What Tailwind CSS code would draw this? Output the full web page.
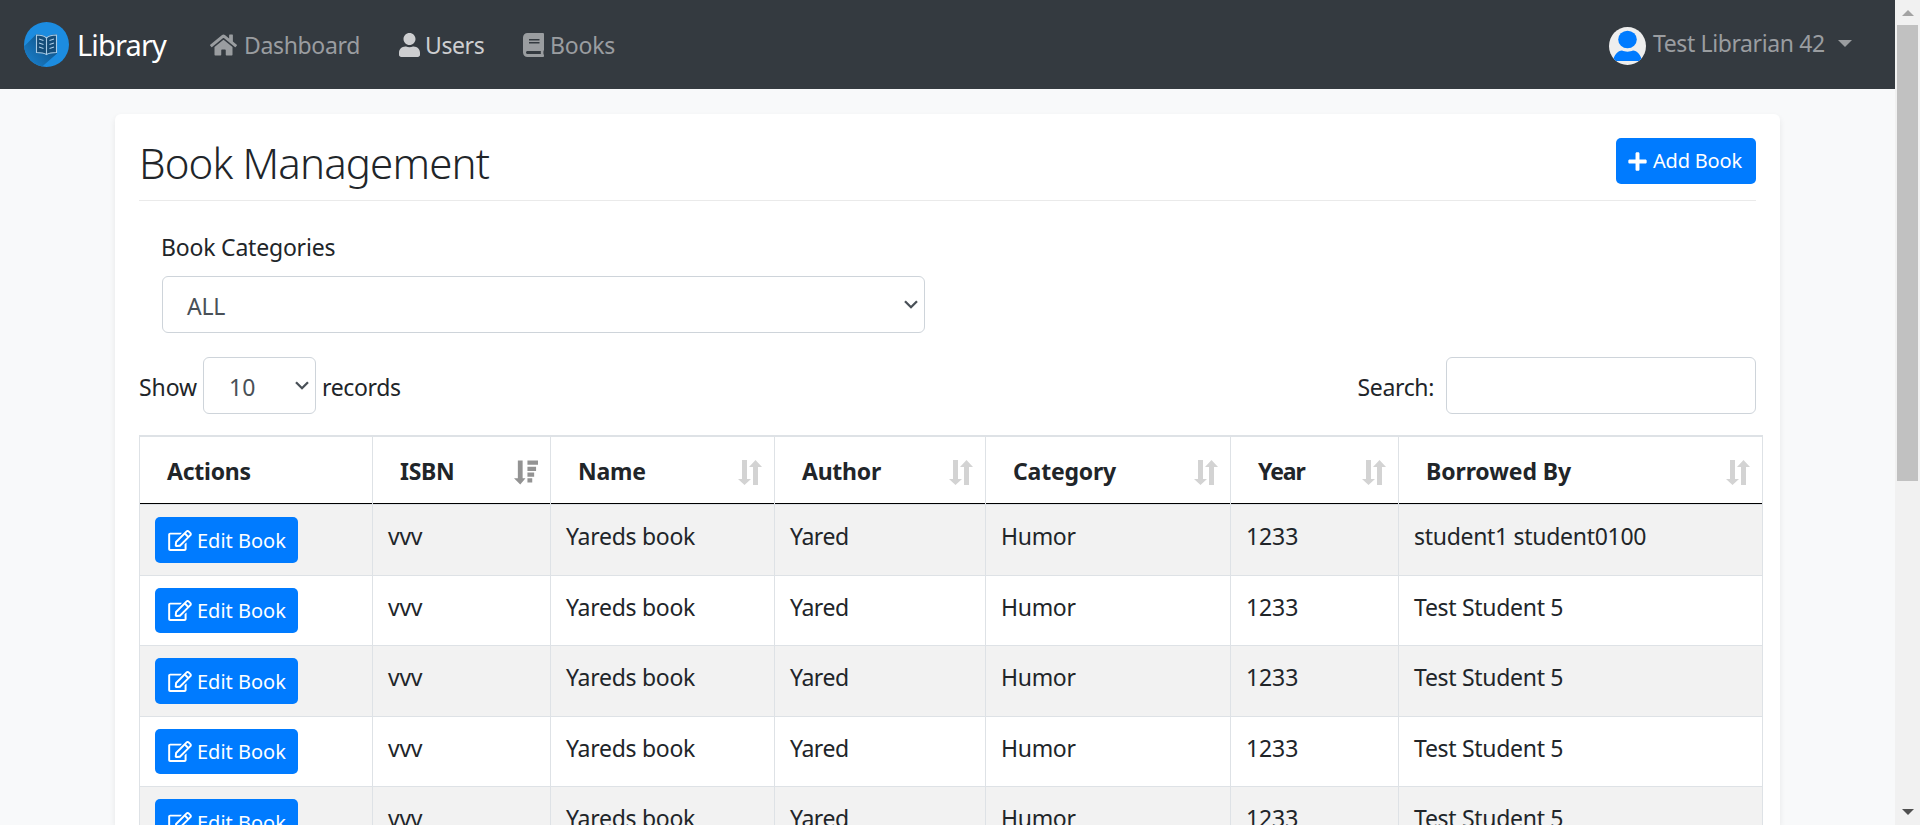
<!DOCTYPE html>
<html lang="en">
<head>
<meta charset="utf-8">
<title>Library - Book Management</title>
<script src="https://cdn.jsdelivr.net/npm/@tailwindcss/browser@4"></script>
</head>
<body class="h-[825px] overflow-hidden bg-[#f8f9fa] font-['Noto_Sans',sans-serif] text-[23px] leading-9 text-[#212529]">
<svg class="hidden">
  <symbol id="home" viewBox="0 0 576 512"><path d="M280.37 148.26L96 300.11V464a16 16 0 0 0 16 16l112.06-.29a16 16 0 0 0 15.92-16V368a16 16 0 0 1 16-16h64a16 16 0 0 1 16 16v95.64a16 16 0 0 0 16 16.05L464 480a16 16 0 0 0 16-16V300L295.67 148.26a12.19 12.19 0 0 0-15.3 0zM571.6 251.47L488 182.56V44.05a12 12 0 0 0-12-12h-56a12 12 0 0 0-12 12v72.61L318.47 43a48 48 0 0 0-61 0L4.34 251.47a12 12 0 0 0-1.6 16.9l25.5 31A12 12 0 0 0 45.15 301l235.22-193.74a12.19 12.19 0 0 1 15.3 0L530.9 301a12 12 0 0 0 16.9-1.6l25.5-31a12 12 0 0 0-1.7-16.93z"/></symbol>
  <symbol id="user" viewBox="0 0 448 512"><path d="M224 256c70.7 0 128-57.3 128-128S294.7 0 224 0 96 57.3 96 128s57.3 128 128 128zm89.6 32h-16.7c-22.2 10.2-46.9 16-72.9 16s-50.6-5.8-72.9-16h-16.7C60.2 288 0 348.2 0 422.4V464c0 26.5 21.5 48 48 48h352c26.5 0 48-21.5 48-48v-41.6c0-74.2-60.2-134.4-134.4-134.4z"/></symbol>
  <symbol id="book" viewBox="0 0 448 512"><path d="M448 360V24c0-13.3-10.7-24-24-24H96C43 0 0 43 0 96v320c0 53 43 96 96 96h328c13.3 0 24-10.7 24-24v-16c0-7.5-3.5-14.3-8.9-18.7-4.2-15.4-4.2-59.3 0-74.7 5.4-4.3 8.9-11.1 8.9-18.6zM128 134c0-3.3 2.7-6 6-6h212c3.3 0 6 2.7 6 6v20c0 3.3-2.7 6-6 6H134c-3.3 0-6-2.7-6-6v-20zm0 64c0-3.3 2.7-6 6-6h212c3.3 0 6 2.7 6 6v20c0 3.3-2.7 6-6 6H134c-3.3 0-6-2.7-6-6v-20zm253.4 250H96c-17.7 0-32-14.3-32-32 0-17.6 14.4-32 32-32h285.4c-1.9 17.1-1.9 46.9 0 64z"/></symbol>
  <symbol id="plus" viewBox="0 0 448 512"><path d="M416 208H272V64c0-17.67-14.33-32-32-32h-32c-17.67 0-32 14.33-32 32v144H32c-17.67 0-32 14.33-32 32v32c0 17.67 14.33 32 32 32h144v144c0 17.67 14.33 32 32 32h32c17.67 0 32-14.33 32-32V304h144c17.67 0 32-14.33 32-32v-32c0-17.67-14.33-32-32-32z"/></symbol>
  <symbol id="edit" viewBox="0 0 576 512"><path d="M402.3 344.9l32-32c5-5 13.7-1.5 13.7 5.7V464c0 26.5-21.5 48-48 48H48c-26.5 0-48-21.5-48-48V112c0-26.5 21.5-48 48-48h273.5c7.1 0 10.7 8.6 5.7 13.7l-32 32c-1.5 1.5-3.5 2.3-5.7 2.3H48v352h352V350.5c0-2.1.8-4.1 2.3-5.6zm156.6-201.8L296.3 405.7l-90.4 10c-26.2 2.9-48.5-19.2-45.6-45.6l10-90.4L432.9 17.1c22.9-22.9 59.9-22.9 82.7 0l43.2 43.2c22.9 22.9 22.9 60 .1 82.8zM460.1 174L402 115.9 216.2 301.8l-7.3 65.3 65.3-7.3L460.1 174zm64.8-79.7l-43.2-43.2c-4.1-4.1-10.8-4.1-14.8 0L436 82l58.1 58.1 30.9-30.9c4-4.2 4-10.8-.1-14.9z"/></symbol>
  <symbol id="sort" viewBox="0 0 24 25"><path d="M4 0h5v19h4l-6.500 6-6.500-6h4zM15 25h5V7h4l-6.500-7-6.500 7h4z"/></symbol>
  <symbol id="sorted" viewBox="0 0 25 25"><path d="M4 0h5v18.500h3l-5.500 6.500-6.500-6.500h4zM14 0h11v4.500h-11zM14 6.500h9v4.500h-9zM14 12.500h7v4.500h-7zM14 18.500h5v4.500h-5z"/></symbol>
  <symbol id="chevron" viewBox="0 0 14 9"><path d="M1 1.200l6 6 6-6" fill="none" stroke="#495057" stroke-width="2.300"/></symbol>
</svg>
<div class="flex h-full">
  <div class="min-w-0 flex-1">
    <nav class="flex h-[89px] items-center bg-[#343a40] pl-6 text-[#9a9da0]">
      <svg class="size-[45px] shrink-0" viewBox="0 0 45 45">
        <defs>
          <clipPath id="disc"><circle cx="22.500" cy="22.500" r="22.500"/></clipPath>
          <linearGradient id="fade" x1="1" y1="0" x2="0" y2="1"><stop offset=".25" stop-color="#11588f"/><stop offset="1" stop-color="#1c8ce0"/></linearGradient>
        </defs>
        <g clip-path="url(#disc)">
          <path fill="#1c8ce0" d="M0 0h45v45H0z"/>
          <path fill="url(#fade)" d="M12 12.500l-14 14V50h14l21-18.500V13L22.500 15z"/>
          <path fill="#144c78" d="M12 12.500c4 0 8 .5 10.500 3 2.500-2.500 6.500-3 10.500-3v18c-4 0-8 .5-10.500 2-2.500-1.500-6.500-2-10.500-2z"/>
          <path fill="none" stroke="#a9cbe6" stroke-width="1.100" d="M12.500 13c4 0 7.500.5 10 3 2.500-2.500 6-3 10-3v17.500c-4 0-7.500.5-10 2-2.500-1.500-6-2-10-2zM22.500 16v16.500M15 17l4.500 1.500M15 21l4.500 1.500M15 25l4.500 1.500M30 17l-4.500 1.500M30 21l-4.500 1.500M30 25l-4.500 1.500"/>
        </g>
      </svg>
      <span class="ml-[8px] w-[133px] text-[29px] tracking-[-0.85px] text-white">Library</span>
      <a class="flex items-center"><svg class="h-6 w-[27px] fill-current"><use href="#home"/></svg><span class="ml-[7px] w-[155px] tracking-[-0.35px]">Dashboard</span></a>
      <a class="flex items-center text-[#cdced0]"><svg class="h-6 w-[21px] fill-current"><use href="#user"/></svg><span class="ml-[5px] w-[98px] tracking-[-0.4px]">Users</span></a>
      <a class="flex items-center"><svg class="h-6 w-[21px] fill-current"><use href="#book"/></svg><span class="ml-[6px] tracking-[-0.2px]">Books</span></a>
      <a class="mr-[43px] ml-auto flex items-center">
        <svg class="mt-[3px] h-[38px] w-[37px]" viewBox="0 0 37 38">
          <clipPath id="face"><ellipse cx="18.500" cy="19" rx="18.500" ry="19"/></clipPath>
          <g clip-path="url(#face)"><path fill="#eee" d="M0 0h37v38H0z"/><ellipse cx="18.500" cy="12.500" rx="9.300" ry="8.700" fill="#007bff"/><path fill="#007bff" d="M4 34c1-6 5-10.500 9-10.500 3 1.500 8 1.500 11 0 4 0 8 4.500 9 10.500z"/></g>
        </svg>
        <span class="-mt-[3px] ml-[7px] w-[172px] tracking-[-0.39px] whitespace-nowrap">Test Librarian 42</span>
        <svg class="-mt-[3px] ml-[13px] h-[7px] w-[14px] fill-current" viewBox="0 0 14 7"><path d="M0 0h14L7 7z"/></svg>
      </a>
    </nav>
    <main class="mt-[25px] ml-[115px] h-[711px] w-[1665px] overflow-hidden rounded-t-md bg-white pt-6 pl-6 shadow-[0_3px_6px_rgba(0,0,0,0.075)]">
      <div class="flex h-[63px] w-[1617px] items-start justify-between border-b border-[#eaeaea]">
        <h1 class="-mt-[1px] text-[42px] leading-[52px] font-light tracking-[-0.85px]">Book Management</h1>
        <button class="flex h-[46px] w-[140px] items-center rounded-[5px] bg-[#007bff] pl-[12px] text-[20px] tracking-[-0.2px] text-white"><svg class="h-[21px] w-[19px] fill-current"><use href="#plus"/></svg><span class="ml-1.5 whitespace-nowrap">Add Book</span></button>
      </div>
      <div class="ml-[23px] pt-[28px]">
        <label class="-ml-px block tracking-[-0.2px]">Book Categories</label>
        <div class="mt-[11px] flex h-[57px] w-[763px] items-center justify-between rounded-md border border-[#ced4da] pr-[6px] pl-6 text-[#495057]"><span class="mt-[3px] tracking-[-0.3px]">ALL</span><svg class="-mt-[1px] h-[9px] w-[14px]"><use href="#chevron"/></svg></div>
      </div>
      <div class="mt-6 flex h-[57px] w-[1617px] items-center">
        <span class="mt-[3px] w-[64px] tracking-[-0.1px]">Show</span>
        <div class="flex h-full w-[113px] items-center justify-between rounded-md border border-[#ced4da] pr-[6px] pl-[25px] text-[#495057]"><span class="mt-[3px]">10</span><svg class="-mt-[1px] h-[9px] w-[14px]"><use href="#chevron"/></svg></div>
        <span class="mt-[3px] ml-[6px] tracking-[-0.35px]">records</span>
        <span class="mt-[3px] mr-[12px] ml-auto tracking-[-0.35px]">Search:</span>
        <div class="h-full w-[310px] rounded-md border border-[#ced4da]"></div>
      </div>
      <table class="mt-[21px] w-[1624px] table-fixed border-separate border-spacing-0 border-t-2 border-l border-[#dee2e6]">
        <colgroup><col class="w-[233px]"><col class="w-[178px]"><col class="w-[224px]"><col class="w-[211px]"><col class="w-[245px]"><col class="w-[168px]"><col class="w-[364px]"></colgroup>
        <thead><tr id="head"></tr></thead>
        <tbody id="rows"></tbody>
      </table>
    </main>
  </div>
  <aside class="flex w-[25px] flex-col items-center bg-[#f1f1f1]">
    <svg class="mt-[10px] h-[6px] w-[12px] fill-[#a3a3a3]" viewBox="0 0 12 6"><path d="M0 6h12L6 0z"/></svg>
    <div class="mt-[9px] h-[456px] w-[21px] bg-[#c1c1c1]"></div>
    <svg class="mt-auto mb-[10px] h-[6px] w-[12px] fill-[#505050]" viewBox="0 0 12 6"><path d="M0 0h12L6 6z"/></svg>
  </aside>
</div>
<script>
const columns = [
  ['Actions', '', 'tracking-[-0.25px]'],
  ['ISBN', 'sorted', 'tracking-[-0.3px]'],
  ['Name', 'sort', 'tracking-[-0.2px]'],
  ['Author', 'sort', 'tracking-[-0.25px]'],
  ['Category', 'sort', 'tracking-[-0.2px]'],
  ['Year', 'sort', 'tracking-[-1.1px]'],
  ['Borrowed By', 'sort', 'tracking-[-0.1px]'],
];
document.getElementById('head').innerHTML = columns.map(([name, icon, tracking]) => `
  <th class="h-[68px] border-r border-b border-[#dee2e6] p-0 text-left">
    <div class="flex h-[67px] items-center justify-between border-b border-black pr-[12.5px] pl-[27px]">
      <span class="mt-[2px] ${tracking}">${name}</span>
      ${icon ? `<svg class="mt-[5px] h-[25px] w-6 ${icon === 'sorted' ? 'fill-[#939393]' : 'fill-[#d3d3d3]'}"><use href="#${icon}"/></svg>` : ''}
    </div>
  </th>`).join('');

const borrowers = ['student1 student0100', 'Test Student 5', 'Test Student 5', 'Test Student 5', 'Test Student 5'];
const cell = 'border-r border-b border-[#dee2e6] p-0 pt-[13px] pl-[15px] align-top';
document.getElementById('rows').innerHTML = borrowers.map((who, i) => `
  <tr class="${i % 2 ? 'h-[70px] bg-white' : 'h-[71px] bg-[#f2f2f2]'}">
    <td class="border-r border-b border-[#dee2e6] p-0 pt-3 pl-[15px] align-top">
      <button class="flex w-[143px] items-center rounded-[5px] bg-[#007bff] pl-[13px] text-[20px] text-white ${i % 2 ? 'h-[45px]' : 'h-[46px]'}"><svg class="h-[21px] w-6 fill-current"><use href="#edit"/></svg><span class="mt-px ml-[5px] whitespace-nowrap">Edit Book</span></button>
    </td>
    <td class="${cell} tracking-[-0.3px]">vvv</td>
    <td class="${cell} tracking-[-0.28px]">Yareds book</td>
    <td class="${cell} tracking-[-0.45px]">Yared</td>
    <td class="${cell} tracking-[-0.3px]">Humor</td>
    <td class="${cell} tracking-[-0.1px]">1233</td>
    <td class="${cell} tracking-[-0.3px]">${who}</td>
  </tr>`).join('');
</script>
</body>
</html>
